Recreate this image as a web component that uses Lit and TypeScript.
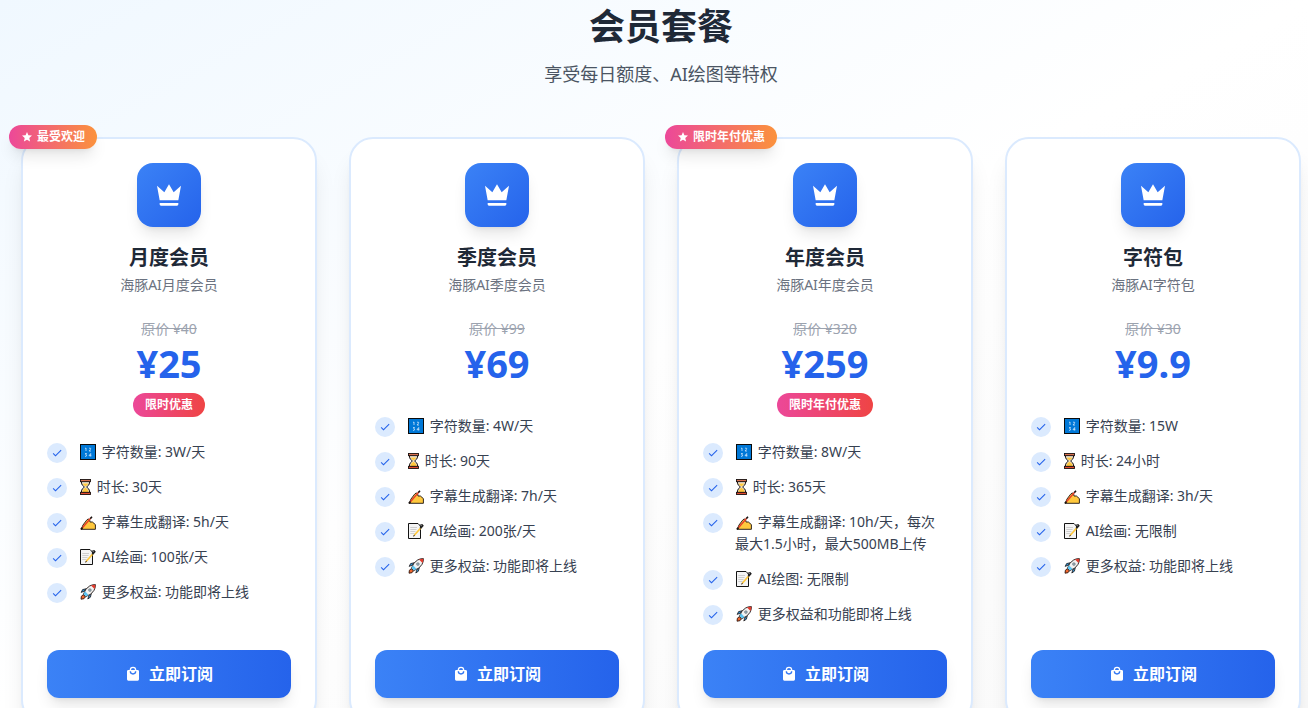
import { LitElement, html, css, svg, nothing } from "lit";
import { customElement, property } from "lit/decorators.js";

type IconName = "numbers" | "hourglass" | "writing" | "memo" | "rocket";

interface Feature {
  icon: IconName;
  text: string;
}

interface Plan {
  name: string;
  description: string;
  originalPrice: string;
  price: string;
  ribbon?: string;
  promo?: string;
  features: Feature[];
}

const PLANS: Plan[] = [
  {
    name: "月度会员",
    description: "海豚AI月度会员",
    originalPrice: "原价 ¥40",
    price: "¥25",
    ribbon: "最受欢迎",
    promo: "限时优惠",
    features: [
      { icon: "numbers", text: "字符数量: 3W/天" },
      { icon: "hourglass", text: "时长: 30天" },
      { icon: "writing", text: "字幕生成翻译: 5h/天" },
      { icon: "memo", text: "AI绘画: 100张/天" },
      { icon: "rocket", text: "更多权益: 功能即将上线" },
    ],
  },
  {
    name: "季度会员",
    description: "海豚AI季度会员",
    originalPrice: "原价 ¥99",
    price: "¥69",
    features: [
      { icon: "numbers", text: "字符数量: 4W/天" },
      { icon: "hourglass", text: "时长: 90天" },
      { icon: "writing", text: "字幕生成翻译: 7h/天" },
      { icon: "memo", text: "AI绘画: 200张/天" },
      { icon: "rocket", text: "更多权益: 功能即将上线" },
    ],
  },
  {
    name: "年度会员",
    description: "海豚AI年度会员",
    originalPrice: "原价 ¥320",
    price: "¥259",
    ribbon: "限时年付优惠",
    promo: "限时年付优惠",
    features: [
      { icon: "numbers", text: "字符数量: 8W/天" },
      { icon: "hourglass", text: "时长: 365天" },
      { icon: "writing", text: "字幕生成翻译: 10h/天，每次最大1.5小时，最大500MB上传" },
      { icon: "memo", text: "AI绘图: 无限制" },
      { icon: "rocket", text: "更多权益和功能即将上线" },
    ],
  },
  {
    name: "字符包",
    description: "海豚AI字符包",
    originalPrice: "原价 ¥30",
    price: "¥9.9",
    features: [
      { icon: "numbers", text: "字符数量: 15W" },
      { icon: "hourglass", text: "时长: 24小时" },
      { icon: "writing", text: "字幕生成翻译: 3h/天" },
      { icon: "memo", text: "AI绘画: 无限制" },
      { icon: "rocket", text: "更多权益: 功能即将上线" },
    ],
  },
];

const GLYPHS = {
  crown: "M5 16L3 5L8.5 10L12 4L15.5 10L21 5L19 16H5M19 19C19 19.6 18.6 20 18 20H6C5.4 20 5 19.6 5 19V18H19V19Z",
  star: "M12 17.27L18.18 21L16.54 13.97L22 9.24L14.81 8.62L12 2L9.19 8.62L2 9.24L7.45 13.97L5.82 21L12 17.27Z",
  check: "M21 7L9 19L3.5 13.5L4.91 12.09L9 16.17L19.59 5.59L21 7Z",
  bag: "M12 13A5 5 0 0 1 7 8H9A3 3 0 0 0 12 11A3 3 0 0 0 15 8H17A5 5 0 0 1 12 13M12 3A3 3 0 0 1 15 6H9A3 3 0 0 1 12 3M19 6H17A5 5 0 0 0 12 1A5 5 0 0 0 7 6H5C3.89 6 3 6.89 3 8V20A2 2 0 0 0 5 22H19A2 2 0 0 0 21 20V8C21 6.89 20.1 6 19 6Z",
};

const glyph = (name: keyof typeof GLYPHS) => html`
  <svg class="glyph" viewBox="0 0 24 24" fill="currentColor" aria-hidden="true">
    <path d=${GLYPHS[name]}></path>
  </svg>
`;

// Small full-colour pictures on a 16-unit tall grid.
const PICTURES = {
  numbers: svg`
    <rect x="0.5" y="0.5" width="15" height="15" fill="#0078d7" stroke="#0b0b0b"/>
    <path d="M5 4.5L6 4V7M9 4.5Q10 3.6 10.7 4.4Q11 5 9 7H11M5 9.5H6.5L5.7 11Q7 11 6.5 12Q6 12.7 5 12.3M10.7 12.5V9.5L9 11.7H11.3" fill="none" stroke="#cfe6fa" stroke-width="0.8"/>
  `,
  hourglass: svg`
    <path d="M1.5 2.5H9.5V4Q9.5 6 6.6 8Q9.5 10 9.5 12V13.5H1.5V12Q1.5 10 4.4 8Q1.5 6 1.5 4Z" fill="#f3eadc" stroke="#1a1210"/>
    <path d="M2.6 4.6H8.4Q7.8 6.3 5.5 7.6Q3.2 6.3 2.6 4.6M5.5 8.6Q8.6 10.8 8.6 13H2.4Q2.4 10.8 5.5 8.6" fill="#ffc83d"/>
    <rect x="0.5" y="0.5" width="10" height="2.2" fill="#d8704f" stroke="#1a1210" stroke-width="0.9"/>
    <rect x="0.5" y="13.3" width="10" height="2.2" fill="#e0492f" stroke="#1a1210" stroke-width="0.9"/>
  `,
  writing: svg`
    <path d="M1.2 15.3L3 11L6.6 6.2Q8 4.2 9.6 5.4L10 8H12.4L15.4 10.6V15.3Z" fill="#ffc83d" stroke="#1a1210" stroke-width="0.9" stroke-linejoin="round"/>
    <path d="M2.4 13.8L10.6 4.2" stroke="#e8402a" stroke-width="1.5"/>
    <path d="M0.8 15.4L2.6 13.6M10.3 4.6L12 2.8" stroke="#1a1210" stroke-width="1.6"/>
  `,
  memo: svg`
    <path d="M0.5 0.5H10L12.5 3V15.5H0.5Z" fill="#f4f4f4" stroke="#141414"/>
    <path d="M2.3 4.5H9M2.3 6.5H8.5M2.3 8.5H7.5M2.3 10.5H6.5" stroke="#c4c4c4" stroke-width="0.8"/>
    <path d="M6.3 12.3L13 4.6" stroke="#ffc83d" stroke-width="1.6"/>
    <path d="M5.4 13.3L6.6 12" stroke="#55401b" stroke-width="1.1"/>
    <path d="M12.9 4.7L14.6 2.7" stroke="#222222" stroke-width="2" stroke-linecap="round"/>
    <path d="M11.6 2.6Q13.2 0.9 15 2" fill="none" stroke="#141414"/>
  `,
  rocket: svg`
    <path d="M1 15.2Q0.6 11.6 3.2 10.8L5.4 12.8Q4.8 15.4 1 15.2" fill="#f0662e" stroke="#1a1210" stroke-width="0.8"/>
    <path d="M4.5 7L1.2 8.4L2.6 5.6L6 4.8ZM9 11.5L7.8 15L10.4 13.2L11.2 10Z" fill="#2c9be3" stroke="#1a1210" stroke-width="0.8"/>
    <path d="M3.4 10.3Q5.2 4.3 9.6 2Q12.4 0.4 15.4 0.6Q15.6 3.6 14 6.4Q11.7 10.8 5.7 12.6Z" fill="#f2f2f2" stroke="#1a1210" stroke-width="0.9"/>
    <path d="M11 1.5Q13.2 0.6 15.3 0.7Q15.5 2.8 14.5 5Z" fill="#e23a2c"/>
    <path d="M3.6 10L5 7.2L8.6 10.9L5.8 12.2Z" fill="#5ac4f2"/>
    <circle cx="9.9" cy="6.1" r="1.4" fill="#8fa9b8" stroke="#666666" stroke-width="0.5"/>
  `,
};

const picture = (name: IconName) => {
  const width = name === "hourglass" ? 11 : 16;
  return html`<svg class="picture" viewBox="0 0 ${width} 16" width=${width} height="16" aria-hidden="true">${PICTURES[name]}</svg>`;
};

@customElement("plan-card")
export class PlanCard extends LitElement {
  static styles = css`
    :host {
      display: flex;
      position: relative;
      min-width: 0;
    }
    .card {
      flex: 1;
      min-width: 0;
      display: flex;
      flex-direction: column;
      box-sizing: border-box;
      padding: 24px;
      border: 2px solid #dbeafe;
      border-radius: 24px;
      background: #ffffff;
      box-shadow: 0 20px 25px -5px rgba(0, 0, 0, 0.1), 0 8px 10px -6px rgba(0, 0, 0, 0.1);
    }
    .ribbon {
      position: absolute;
      top: -12px;
      left: -12px;
      display: flex;
      align-items: center;
      gap: 4px;
      padding: 0 12px;
      border-radius: 12px;
      background: linear-gradient(to right, #ec4899, #fb923c);
      color: #ffffff;
      font-size: 12px;
      font-weight: 700;
      line-height: 24px;
      box-shadow: 0 10px 15px -3px rgba(0, 0, 0, 0.1), 0 4px 6px -4px rgba(0, 0, 0, 0.1);
    }
    .glyph {
      display: block;
      flex: none;
      width: 12px;
      height: 12px;
    }
    .head {
      display: flex;
      flex-direction: column;
      align-items: center;
      text-align: center;
      margin-bottom: 24px;
    }
    .emblem {
      display: grid;
      place-items: center;
      width: 64px;
      height: 64px;
      margin-bottom: 16px;
      border-radius: 16px;
      background: linear-gradient(to bottom right, #3b82f6, #2563eb);
      color: #ffffff;
      box-shadow: 0 10px 15px -3px rgba(0, 0, 0, 0.1), 0 4px 6px -4px rgba(0, 0, 0, 0.1);
    }
    .emblem .glyph {
      width: 32px;
      height: 32px;
    }
    .name {
      margin: 0 0 2px;
      color: #1f2937;
      font-size: 20px;
      font-weight: 700;
      line-height: 30px;
    }
    .description {
      margin: 0;
      color: #6b7280;
      font-size: 14px;
      line-height: 20px;
    }
    .pricing {
      display: flex;
      flex-direction: column;
      align-items: center;
      margin-bottom: 24px;
    }
    .original {
      color: #9ca3af;
      font-size: 14px;
      line-height: 20px;
    }
    .price {
      margin-bottom: 4px;
      color: #2563eb;
      font-size: 38px;
      font-weight: 700;
      line-height: 48px;
    }
    .promo {
      margin-top: 2px;
      padding: 0 12px;
      border-radius: 12px;
      background: linear-gradient(to right, #ec4899, #ef4444);
      color: #ffffff;
      font-size: 12px;
      font-weight: 700;
      line-height: 24px;
    }
    .features {
      flex: 1;
      display: flex;
      flex-direction: column;
      gap: 13px;
      margin: 0 0 25px;
      padding: 0;
      list-style: none;
    }
    .feature {
      display: flex;
      align-items: flex-start;
      gap: 12px;
      color: #374151;
      font-size: 14px;
      line-height: 22px;
    }
    .tick {
      flex: none;
      display: grid;
      place-items: center;
      width: 20px;
      height: 20px;
      margin-top: 2px;
      border-radius: 50%;
      background: #dbeafe;
      color: #2563eb;
    }
    .picture {
      display: inline-block;
      margin: 0 2px 0 1px;
      vertical-align: -3px;
    }
    .subscribe {
      display: flex;
      align-items: center;
      justify-content: center;
      gap: 8px;
      width: 100%;
      padding: 12px 24px;
      border: 0;
      border-radius: 12px;
      background: linear-gradient(to right, #3b82f6, #2563eb);
      color: #ffffff;
      font-family: inherit;
      font-size: 16px;
      font-weight: 700;
      line-height: 24px;
      cursor: pointer;
      box-shadow: 0 10px 15px -3px rgba(0, 0, 0, 0.1), 0 4px 6px -4px rgba(0, 0, 0, 0.1);
    }
    .subscribe .glyph {
      width: 16px;
      height: 16px;
    }
  `;

  @property({ attribute: false }) plan!: Plan;

  render() {
    const { plan } = this;
    return html`
      <article class="card">
        <header class="head">
          <div class="emblem">${glyph("crown")}</div>
          <h2 class="name">${plan.name}</h2>
          <p class="description">${plan.description}</p>
        </header>
        <div class="pricing">
          <s class="original">${plan.originalPrice}</s>
          <strong class="price">${plan.price}</strong>
          ${plan.promo ? html`<span class="promo">${plan.promo}</span>` : nothing}
        </div>
        <ul class="features">
          ${plan.features.map(
            (feature) => html`
              <li class="feature">
                <span class="tick">${glyph("check")}</span>
                <span>${picture(feature.icon)} ${feature.text}</span>
              </li>
            `
          )}
        </ul>
        <button class="subscribe" type="button">${glyph("bag")}<span>立即订阅</span></button>
      </article>
      ${plan.ribbon ? html`<div class="ribbon">${glyph("star")}<span>${plan.ribbon}</span></div>` : nothing}
    `;
  }
}

@customElement("app-root")
export class AppRoot extends LitElement {
  static styles = css`
    :host {
      display: block;
      height: 100vh;
      overflow-y: auto;
      scrollbar-width: none;
      font-family: "Noto Sans", "Noto Sans CJK SC", sans-serif;
      background: linear-gradient(to bottom right, #f0f8ff, #ffffff 50%, #fafafa);
    }
    .page {
      padding: 7px 7px 48px 21px;
    }
    .intro {
      margin-bottom: 49px;
      text-align: center;
    }
    .title {
      margin: 0 0 13px;
      color: #1f2937;
      font-size: 36px;
      font-weight: 700;
      line-height: 40px;
    }
    .subtitle {
      margin: 0;
      color: #4b5563;
      font-size: 18px;
      line-height: 28px;
    }
    .plans {
      display: grid;
      grid-template-columns: repeat(4, minmax(0, 1fr));
      gap: 32px;
    }
    @media (max-width: 1023px) {
      .plans {
        grid-template-columns: repeat(2, minmax(0, 1fr));
      }
    }
    @media (max-width: 639px) {
      .plans {
        grid-template-columns: minmax(0, 1fr);
      }
    }
  `;

  render() {
    return html`
      <main class="page">
        <header class="intro">
          <h1 class="title">会员套餐</h1>
          <p class="subtitle">享受每日额度、AI绘图等特权</p>
        </header>
        <section class="plans">
          ${PLANS.map((plan) => html`<plan-card .plan=${plan}></plan-card>`)}
        </section>
      </main>
    `;
  }
}
